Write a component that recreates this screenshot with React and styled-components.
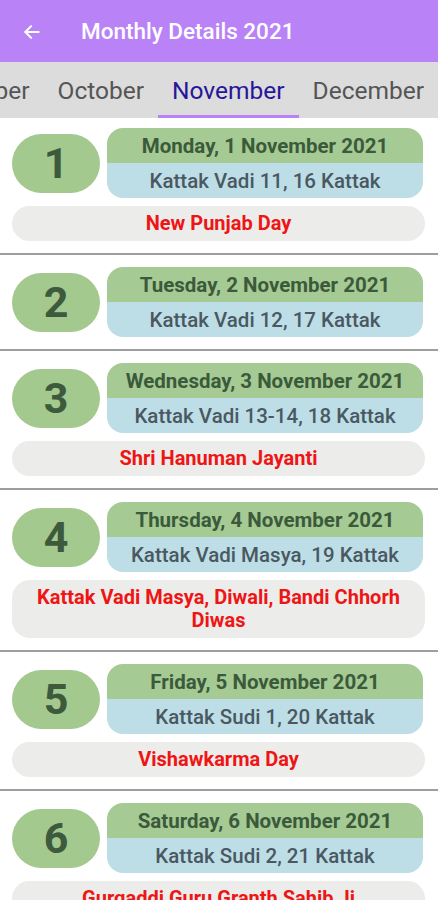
import styled, { createGlobalStyle } from "styled-components";

const GlobalStyle = createGlobalStyle`
  body {
    margin: 0;
    background: #ffffff;
    font-family: Roboto, "Noto Sans", sans-serif;
  }
`;

const months = ["September", "October", "November", "December"];

const days = [
  { n: 1, date: "Monday, 1 November 2021", nanak: "Kattak Vadi 11, 16 Kattak", event: "New Punjab Day" },
  { n: 2, date: "Tuesday, 2 November 2021", nanak: "Kattak Vadi 12, 17 Kattak" },
  { n: 3, date: "Wednesday, 3 November 2021", nanak: "Kattak Vadi 13-14, 18 Kattak", event: "Shri Hanuman Jayanti" },
  { n: 4, date: "Thursday, 4 November 2021", nanak: "Kattak Vadi Masya, 19 Kattak", event: "Kattak Vadi Masya, Diwali, Bandi Chhorh Diwas" },
  { n: 5, date: "Friday, 5 November 2021", nanak: "Kattak Sudi 1, 20 Kattak", event: "Vishawkarma Day" },
  { n: 6, date: "Saturday, 6 November 2021", nanak: "Kattak Sudi 2, 21 Kattak", event: "Gurgaddi Guru Granth Sahib Ji" },
];

const App = () => {
  return (
    <>
      <GlobalStyle />
      <Screen>
        <TopBar>
          <BackButton>
            <svg width="20" height="20" viewBox="0 0 24 24" fill="none" stroke="#fff" strokeWidth="2.4" strokeLinecap="round" strokeLinejoin="round">
              <path d="M20 12H4" />
              <path d="M11 5l-7 7 7 7" />
            </svg>
          </BackButton>
          <Title>Monthly Details 2021</Title>
        </TopBar>
        <TabBar>
          {months.map((m) => (
            <Tab key={m} $active={m === "November"}>
              {m}
            </Tab>
          ))}
        </TabBar>
        <List>
          {days.map((d) => (
            <DayCard key={d.n}>
              <TopRow>
                <DayPill>{d.n}</DayPill>
                <InfoBox>
                  <DateLine>{d.date}</DateLine>
                  <NanakLine>{d.nanak}</NanakLine>
                </InfoBox>
              </TopRow>
              {d.event && <EventPill>{d.event}</EventPill>}
            </DayCard>
          ))}
        </List>
      </Screen>
    </>
  );
};

export default App;

const Screen = styled.div`
  width: 438px;
  height: 900px;
  overflow: hidden;
  background: #ffffff;
`;

const TopBar = styled.div`
  height: 62px;
  background: #b983f7;
  display: flex;
  align-items: center;
`;

const BackButton = styled.div`
  width: 64px;
  display: flex;
  justify-content: center;
  margin-right: 17px;
  margin-top: 2px;
`;

const Title = styled.div`
  color: #ffffff;
  font-size: 22.5px;
  font-weight: 500;
`;

const TabBar = styled.div`
  height: 56px;
  background: #dcdcdc;
  overflow: hidden;
  display: flex;
  justify-content: flex-end;
`;

const Tab = styled.div`
  flex: none;
  padding: 3px 14px 0;
  display: flex;
  align-items: center;
  height: 100%;
  box-sizing: border-box;
  font-size: 24.5px;
  color: ${(p) => (p.$active ? "#27169a" : "#555555")};
  border-bottom: 3px solid ${(p) => (p.$active ? "#b983f7" : "transparent")};
`;

const List = styled.div`
  display: flex;
  flex-direction: column;
`;

const DayCard = styled.div`
  padding: 12px 13px 12px 12px;
  border-bottom: 2px solid #9e9e9e;
  display: flex;
  flex-direction: column;
  gap: 8px;
  &:first-child {
    padding-top: 10px;
  }
`;

const TopRow = styled.div`
  display: flex;
  align-items: center;
  gap: 7px;
`;

const DayPill = styled.div`
  flex: none;
  width: 88px;
  height: 59px;
  border-radius: 30px;
  background: #a4c98f;
  color: #3d5a3d;
  font-size: 43px;
  font-weight: 700;
  display: flex;
  align-items: center;
  justify-content: center;
`;

const InfoBox = styled.div`
  flex: 1;
  margin-right: 2px;
  border-radius: 16px;
  overflow: hidden;
  display: flex;
  flex-direction: column;
`;

const DateLine = styled.div`
  height: 35px;
  background: #a6ca93;
  color: #3b5a3b;
  font-size: 20.5px;
  font-weight: 700;
  display: flex;
  align-items: center;
  justify-content: center;
`;

const NanakLine = styled.div`
  height: 35px;
  background: #bddee6;
  color: #4a5862;
  font-size: 20.5px;
  font-weight: 500;
  display: flex;
  align-items: center;
  justify-content: center;
`;

const EventPill = styled.div`
  background: #ececea;
  border-radius: 18px;
  padding: 6px 20px;
  line-height: 23px;
  color: #ee1515;
  font-size: 20px;
  font-weight: 700;
  text-align: center;
`;
